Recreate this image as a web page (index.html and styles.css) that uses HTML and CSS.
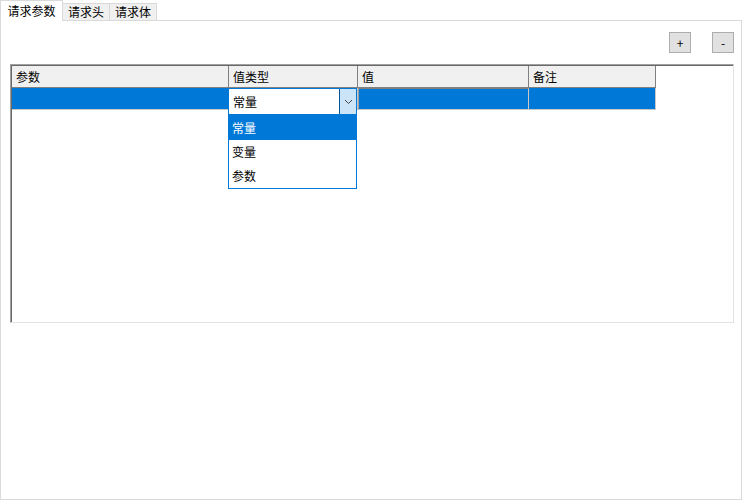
FILE: index.html
```html
<!DOCTYPE html>
<html>
<head>
<meta charset="utf-8">
<link rel="stylesheet" href="styles.css">
</head>
<body>
  <div class="tabs">
    <div class="tab tab-active">请求参数</div>
    <div class="tab tab-2">请求头</div>
    <div class="tab tab-3">请求体</div>
  </div>
  <div class="panel">
    <div class="toolbar">
      <button class="btn">+</button>
      <button class="btn">-</button>
    </div>
    <div class="grid">
      <div class="grid-inner">
        <div class="header">
          <div class="hcell c1">参数</div>
          <div class="hcell c2">值类型</div>
          <div class="hcell c3">值</div>
          <div class="hcell c4">备注</div>
        </div>
        <div class="row">
          <div class="cell c1"></div>
          <div class="cell c2 combo-host">
            <div class="combo">
              <div class="combo-text">常量</div>
              <div class="combo-btn">
                <svg width="9" height="6" viewBox="0 0 9 6"><path d="M1 1 L4.5 4.5 L8 1" fill="none" stroke="#444" stroke-width="1"/></svg>
              </div>
            </div>
            <div class="list">
              <div class="item item-sel">常量</div>
              <div class="item">变量</div>
              <div class="item">参数</div>
            </div>
          </div>
          <div class="cell c3 value-cell"></div>
          <div class="cell c4"></div>
        </div>
      </div>
    </div>
  </div>
</body>
</html>
```
FILE: styles.css
```css
* { box-sizing: border-box; }
html, body { margin: 0; padding: 0; }
body {
  width: 742px;
  height: 501px;
  background: #fff;
  font-family: "Noto Sans CJK SC", "Microsoft YaHei", sans-serif;
  font-size: 12px;
  color: #000;
  overflow: hidden;
}
.tabs {
  display: flex;
  align-items: flex-start;
  height: 20px;
  position: relative;
  z-index: 1;
}
.tab {
  height: 17px;
  margin-top: 3px;
  border: 1px solid #d9d9d9;
  border-bottom: none;
  background: #f0f0f0;
  line-height: 16px;
  text-align: center;
}
.tab-active {
  width: 63px;
  height: 21px;
  margin-top: 0;
  background: #fff;
  line-height: 19px;
}
.tab-2 { width: 47px; border-left: none; }
.tab-3 { width: 48px; margin-left: -1px; }
.panel {
  height: 480px;
  border: 1px solid #d9d9d9;
  padding: 11px 7px 0 9px;
  display: flex;
  flex-direction: column;
}
.toolbar {
  display: flex;
  justify-content: flex-end;
  gap: 21px;
  height: 21px;
  margin-bottom: 11px;
}
.btn {
  width: 22px;
  height: 21px;
  padding: 0;
  margin: 0;
  background: #e1e1e1;
  border: 1px solid #adadad;
  font-family: "Noto Sans CJK SC", sans-serif;
  font-size: 12px;
  line-height: 18px;
  color: #000;
}
.grid {
  width: 724px;
  height: 259px;
  border-top: 1px solid #a0a0a0;
  border-left: 1px solid #a0a0a0;
  border-right: 1px solid #e3e3e3;
  border-bottom: 1px solid #e3e3e3;
}
.grid-inner {
  height: 100%;
  border-top: 1px solid #696969;
  border-left: 1px solid #696969;
}
.header, .row { display: flex; }
.c1 { width: 217px; }
.c2 { width: 129px; }
.c3 { width: 171px; }
.c4 { width: 127px; }
.hcell {
  height: 22px;
  background: #f0f0f0;
  border-right: 1px solid #808080;
  border-bottom: 1px solid #808080;
  padding-left: 4px;
  line-height: 21px;
}
.cell {
  height: 22px;
  background: #0078d7;
  border-right: 1px solid #c8c8c8;
  border-bottom: 1px solid #c8c8c8;
}
.value-cell {
  border-top: 1px solid #808080;
  border-left: 1px solid #a0a0a0;
}
.combo-host { position: relative; }
.combo {
  position: absolute;
  left: -1px;
  top: 0;
  width: 129px;
  height: 27px;
  border: 1px solid #0078d7;
  background: #fff;
  display: flex;
  z-index: 2;
}
.combo-text {
  flex: 1;
  padding-left: 4px;
  line-height: 25px;
}
.combo-btn {
  width: 17px;
  background: #cce4f7;
  border-left: 1px solid #005499;
  display: flex;
  align-items: center;
  justify-content: center;
}
.list {
  position: absolute;
  left: -1px;
  top: 27px;
  width: 129px;
  border: 1px solid #0078d7;
  background: #fff;
  z-index: 3;
}
.item {
  height: 24px;
  line-height: 24px;
  padding-left: 3px;
}
.item-sel {
  background: #0078d7;
  color: #fff;
}
```
